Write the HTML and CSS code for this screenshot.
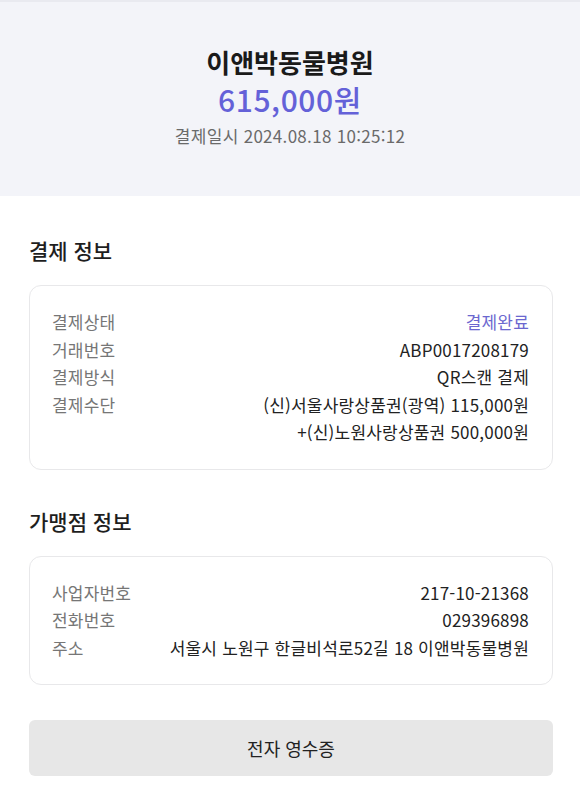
FILE: index.html
```html
<!DOCTYPE html>
<html lang="ko">
<head>
  <meta charset="utf-8">
  <title>결제 상세</title>
  <link rel="stylesheet" href="styles.css">
</head>
<body>
  <!-- 상단 요약 -->
  <header class="summary">
    <h1 class="store">이앤박동물병원</h1>
    <p class="amount">615,000원</p>
    <p class="paid-at">결제일시 2024.08.18 10:25:12</p>
  </header>

  <main class="content">
    <!-- 결제 정보 -->
    <section class="section">
      <h2 class="section-title">결제 정보</h2>
      <div class="card">
        <div class="row"><span class="label">결제상태</span><span class="value done">결제완료</span></div>
        <div class="row"><span class="label">거래번호</span><span class="value">ABP0017208179</span></div>
        <div class="row"><span class="label">결제방식</span><span class="value">QR스캔 결제</span></div>
        <div class="row">
          <span class="label">결제수단</span>
          <span class="value">(신)서울사랑상품권(광역) 115,000원<br>+(신)노원사랑상품권 500,000원</span>
        </div>
      </div>
    </section>

    <!-- 가맹점 정보 -->
    <section class="section">
      <h2 class="section-title">가맹점 정보</h2>
      <div class="card">
        <div class="row"><span class="label">사업자번호</span><span class="value">217-10-21368</span></div>
        <div class="row"><span class="label">전화번호</span><span class="value">029396898</span></div>
        <div class="row"><span class="label">주소</span><span class="value">서울시 노원구 한글비석로52길 18 이앤박동물병원</span></div>
      </div>
    </section>

    <button class="receipt" type="button">전자 영수증</button>
  </main>
</body>
</html>
```

FILE: styles.css
```css
/* 기본 */
body {
  margin: 0;
  background: #ffffff;
  font-family: "Noto Sans CJK KR", "Noto Sans", sans-serif;
  color: #1e1e1e;
}

/* 상단 요약 영역 */
.summary {
  background: #f3f4f9;
  border-top: 2px solid #e9eaf0;
  display: flex;
  flex-direction: column;
  align-items: center;
  padding-top: 42px;
  box-sizing: border-box;
  height: 196px;
}

.store {
  margin: 0;
  font-size: 26px;
  font-weight: 700;
  line-height: 36px;
  color: #1a1a1a;
}

.amount {
  margin: 0;
  font-size: 30px;
  font-weight: 500;
  line-height: 38px;
  letter-spacing: 0.6px;
  color: #6461d8;
}

.paid-at {
  margin: 0;
  font-size: 17px;
  line-height: 36px;
  letter-spacing: 0.3px;
  color: #6a6a6a;
}

/* 본문 */
.content {
  padding: 38px 27px 0 29px;
}

.section {
  margin-bottom: 35px;
}

.section-title {
  margin: 0 0 19px;
  font-size: 21px;
  font-weight: 500;
  line-height: 32px;
  color: #1e1e1e;
}

.card {
  border: 1px solid #e8e8ea;
  border-radius: 12px;
  padding: 22px 23px 23px 22px;
}

.row {
  display: flex;
  justify-content: space-between;
  font-size: 17px;
  line-height: 27.5px;
  letter-spacing: 0.2px;
}

.label {
  color: #767676;
  flex-shrink: 0;
}

.value {
  text-align: right;
  color: #222222;
}

.value.done {
  color: #6b67cf;
}

/* 영수증 버튼 */
.receipt {
  display: block;
  width: 100%;
  height: 56px;
  border: none;
  border-radius: 6px;
  background: #e7e7e7;
  font-family: inherit;
  font-size: 18px;
  color: #222222;
}
```
